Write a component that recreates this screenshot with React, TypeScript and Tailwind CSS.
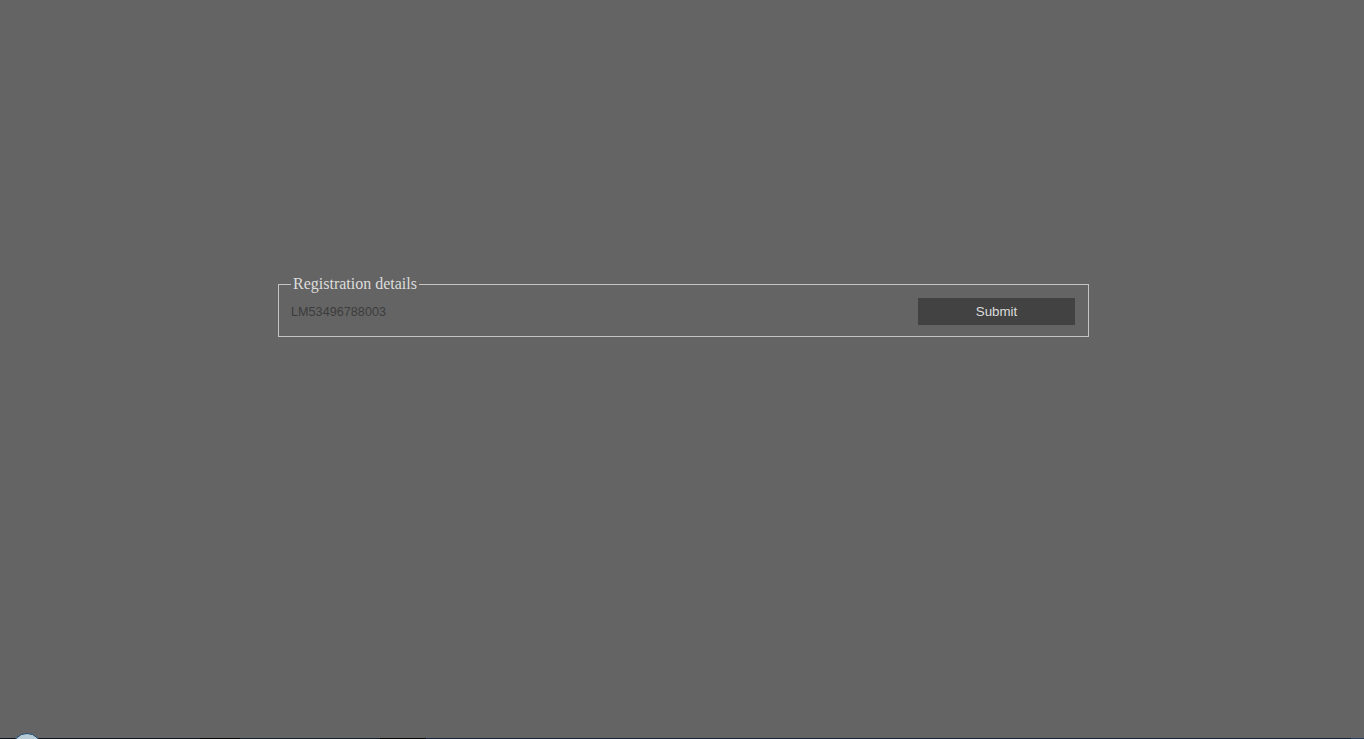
export default function App() {
  return (
    <div className="relative flex h-[739px] w-full flex-col overflow-hidden bg-[#646464]">
      <div className="flex flex-1 justify-center pl-[3px] pt-[275px]">
        <fieldset className="h-[62px] w-[811px] border border-[#c4c4c4] pl-3 pr-[13px] [font-family:'Liberation_Sans',sans-serif]">
          <legend className="px-[2px] text-base leading-[18px] text-[#dcdcdc] [font-family:'Liberation_Serif',serif]">
            Registration details
          </legend>
          <div className="mt-[5px] flex items-start justify-between">
            <span className="pt-[1px] text-[12.67px] leading-[27px] text-[#3c3c3c]">LM53496788003</span>
            <button className="h-[27px] w-[157px] bg-[#424242] text-[13.33px] text-[#dcdcdc]">Submit</button>
          </div>
        </fieldset>
      </div>
      <div className="flex h-px w-full">
        <div className="w-[200px] bg-[#0c1520]" />
        <div className="w-[40px] bg-[#050505]" />
        <div className="w-[140px] bg-[#14202c]" />
        <div className="w-[46px] bg-[#050505]" />
        <div className="flex-1 bg-[#16243a]" />
        <div className="w-[13px] bg-[#2a3d60]" />
      </div>
      <div className="absolute left-[12px] top-[733px] h-[30px] w-[30px] rounded-full border border-[#1f4a70] bg-[#b8ccd8]" />
    </div>
  );
}
